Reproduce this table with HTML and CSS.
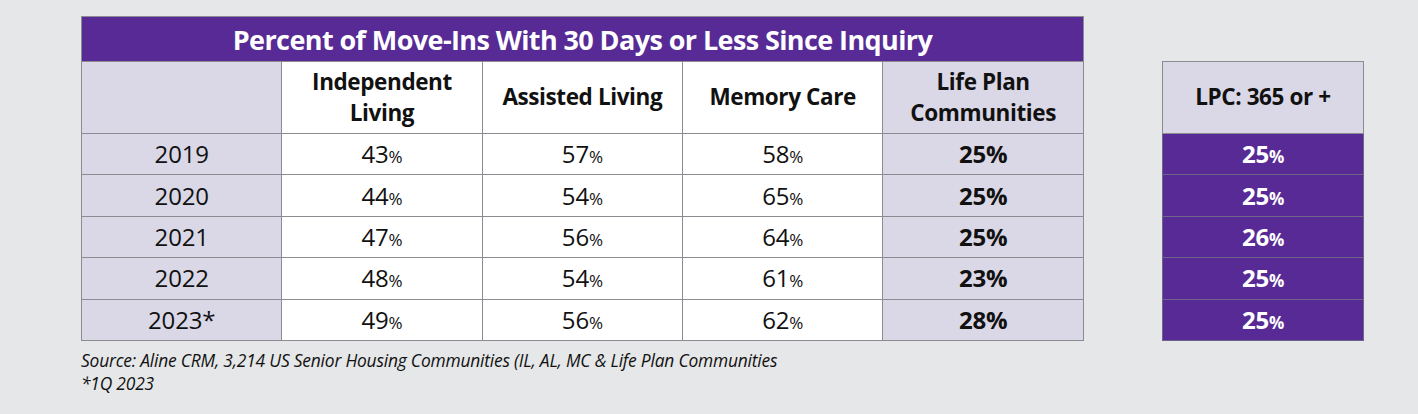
FILE: index.html
```html
<!DOCTYPE html>
<html>
<head>
<meta charset="utf-8">
<link rel="stylesheet" href="styles.css">
</head>
<body>
<div class="page">
  <div class="left">
    <table class="main">
      <tr><th class="title" colspan="5">Percent of Move-Ins With 30 Days or Less Since Inquiry</th></tr>
      <tr class="head">
        <th class="lav"></th>
        <th>Independent<br>Living</th>
        <th>Assisted Living</th>
        <th>Memory Care</th>
        <th class="lav">Life Plan<br>Communities</th>
      </tr>
      <tr><td class="lav year">2019</td><td>43<span class="pc">%</span></td><td>57<span class="pc">%</span></td><td>58<span class="pc">%</span></td><td class="lav lpc">25%</td></tr>
      <tr><td class="lav year">2020</td><td>44<span class="pc">%</span></td><td>54<span class="pc">%</span></td><td>65<span class="pc">%</span></td><td class="lav lpc">25%</td></tr>
      <tr><td class="lav year">2021</td><td>47<span class="pc">%</span></td><td>56<span class="pc">%</span></td><td>64<span class="pc">%</span></td><td class="lav lpc">25%</td></tr>
      <tr><td class="lav year">2022</td><td>48<span class="pc">%</span></td><td>54<span class="pc">%</span></td><td>61<span class="pc">%</span></td><td class="lav lpc">23%</td></tr>
      <tr><td class="lav year">2023*</td><td>49<span class="pc">%</span></td><td>56<span class="pc">%</span></td><td>62<span class="pc">%</span></td><td class="lav lpc">28%</td></tr>
    </table>
    <p class="note">Source: Aline CRM, 3,214 US Senior Housing Communities (IL, AL, MC &amp; Life Plan Communities<br>*1Q 2023</p>
  </div>
  <table class="side">
    <tr class="head"><th class="lav">LPC: 365 or +</th></tr>
    <tr><td class="purple">25<span class="pc">%</span></td></tr>
    <tr><td class="purple">25<span class="pc">%</span></td></tr>
    <tr><td class="purple">26<span class="pc">%</span></td></tr>
    <tr><td class="purple">25<span class="pc">%</span></td></tr>
    <tr><td class="purple">25<span class="pc">%</span></td></tr>
  </table>
</div>
</body>
</html>
```
FILE: styles.css
```css
html, body {
  margin: 0;
  padding: 0;
  background: #e6e7e8;
}
body {
  width: 1418px;
  height: 414px;
  overflow: hidden;
  font-family: "Open Sans", "Noto Sans", sans-serif;
  color: #111;
}
.page {
  display: flex;
  align-items: flex-start;
  gap: 78px;
  padding: 16px 0 0 81px;
}
table {
  border-collapse: collapse;
  table-layout: fixed;
}
.main {
  width: 1003px;
}
.side {
  width: 201px;
  margin-top: 45px;
}
th, td {
  border: 1px solid #8c8b91;
  padding: 0;
  text-align: center;
  background: #fff;
  width: 200px;
}
.title {
  background: #572a95;
  color: #fff;
  height: 44px;
  font-size: 27px;
  font-weight: 700;
  letter-spacing: -0.6px;
  line-height: 1;
}
.head th {
  height: 71px;
  font-size: 22.5px;
  font-weight: 700;
  line-height: 30.5px;
  letter-spacing: -0.4px;
}
td {
  height: 40.4px;
  font-size: 24px;
  line-height: 1;
  font-weight: 400;
  letter-spacing: -0.2px;
}
.lav, th.lav, td.lav {
  background: #dad8e6;
}
.lpc {
  font-weight: 700;
}
.pc {
  font-size: 17px;
}
.purple {
  background: #572a95;
  color: #fff;
  font-weight: 700;
  border-color: #6e6489;
}
.side .head th {
  border-color: #8c8b91;
}
.note {
  margin: 8px 0 0 0;
  font-size: 17.4px;
  font-style: italic;
  line-height: 23px;
  letter-spacing: -0.2px;
  color: #111;
}
```
